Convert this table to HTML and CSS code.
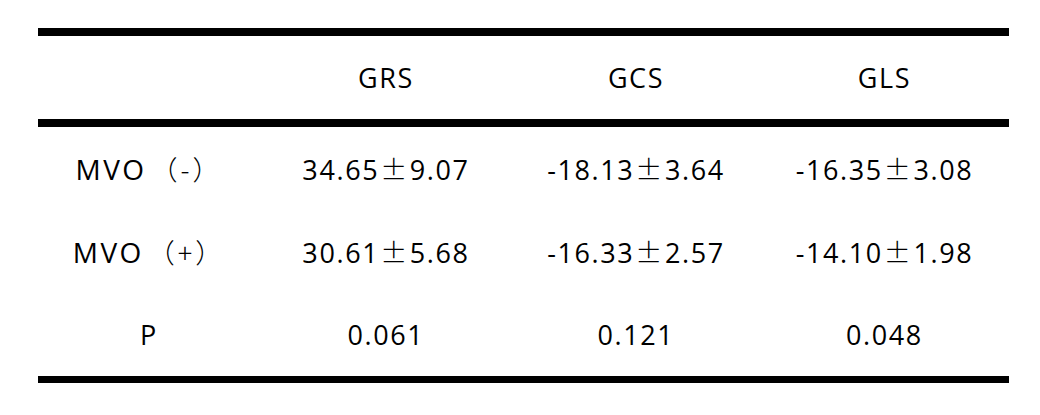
FILE: index.html
```html
<!DOCTYPE html>
<html lang="en">
<head>
    <meta charset="UTF-8">
    <title>MVO strain table</title>
    <link rel="stylesheet" href="styles.css">
</head>
<body>
<div class="sheet">
  <div class="table">
    <div class="row head">
      <span></span>
      <span>GRS</span>
      <span>GCS</span>
      <span>GLS</span>
    </div>
    <div class="row">
      <span><span class="label">MVO</span><span class="paren">（-）</span></span>
      <span>34.65<span class="pm">±</span>9.07</span>
      <span>-18.13<span class="pm">±</span>3.64</span>
      <span>-16.35<span class="pm">±</span>3.08</span>
    </div>
    <div class="row">
      <span><span class="label">MVO</span><span class="paren">（+）</span></span>
      <span>30.61<span class="pm">±</span>5.68</span>
      <span>-16.33<span class="pm">±</span>2.57</span>
      <span>-14.10<span class="pm">±</span>1.98</span>
    </div>
    <div class="row">
      <span>P</span>
      <span>0.061</span>
      <span>0.121</span>
      <span>0.048</span>
    </div>
  </div>
</div>
</body>
</html>
```

FILE: styles.css
```css
* {
  box-sizing: border-box;
}

body {
  margin: 0;
  background: #fff;
  color: #000;
  font-family: "Open Sans", "Noto Sans CJK SC", sans-serif;
  font-size: 27px;
  letter-spacing: 1.6px;
}

.sheet {
  padding: 28px 31px 0 38px;
}

.table {
  border-top: 8px solid #000;
  border-bottom: 7px solid #000;
}

.row {
  display: grid;
  grid-template-columns: 222px 252px 248px 1fr;
  align-items: center;
  height: 83px;
}

.row > span {
  text-align: center;
  white-space: nowrap;
}

.head {
  border-bottom: 8px solid #000;
  height: 91px;
}

.label {
  font-size: 28px;
  letter-spacing: 2.4px;
}

.paren {
  font-family: "Noto Sans CJK SC", sans-serif;
  font-weight: 300;
  margin-left: 4px;
  letter-spacing: 3px;
}

.pm {
  font-family: "Noto Sans CJK SC", sans-serif;
  font-weight: 300;
  margin: 0 1px;
}
```
